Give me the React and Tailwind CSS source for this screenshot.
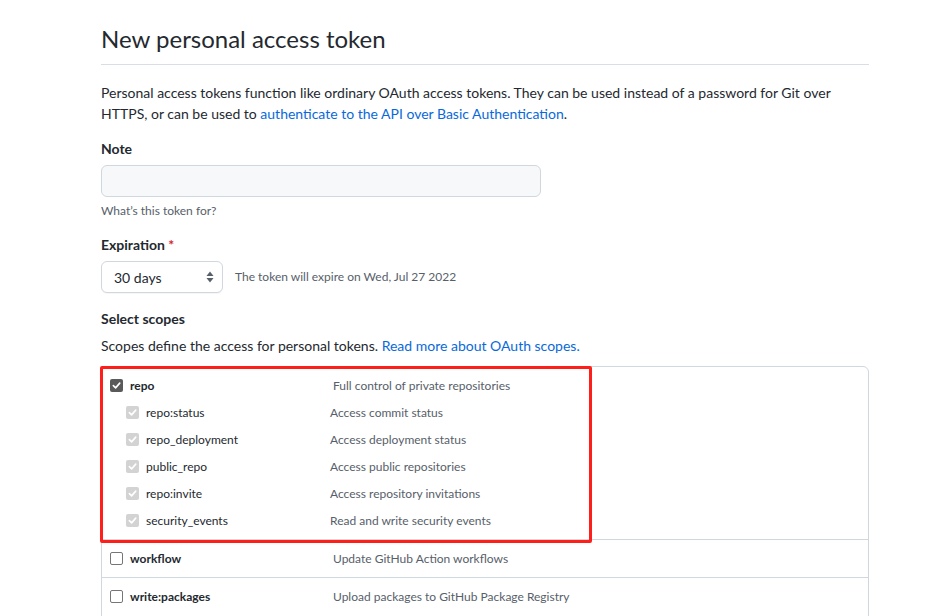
import React from 'react'

// checkbox drawn as a small box with an svg tick
const Check = ({ state }) => {
  if (state === 'off') {
    return <span className="w-[13px] h-[13px] shrink-0 rounded-[2px] border border-[#767676] bg-white" />
  }
  const bg = state === 'on' ? 'bg-[#5a5a5a]' : 'bg-[#d3d3d3]'
  return (
    <span className={`w-[13px] h-[13px] shrink-0 rounded-[2px] ${bg} flex items-center justify-center`}>
      <svg width="9" height="9" viewBox="0 0 10 10" fill="none">
        <path d="M1.5 5.2 L4 7.6 L8.6 2.4" stroke="white" strokeWidth="1.8" strokeLinecap="round" strokeLinejoin="round" />
      </svg>
    </span>
  )
}

const repoScopes = [
  ['repo:status', 'Access commit status'],
  ['repo_deployment', 'Access deployment status'],
  ['public_repo', 'Access public repositories'],
  ['repo:invite', 'Access repository invitations'],
  ['security_events', 'Read and write security events'],
]

const ScopeRow = ({ name, desc, state }) => (
  <div className="h-[27px] flex items-center pl-2">
    <div className="w-[223px] flex items-center gap-[7px]">
      <Check state={state} />
      <span className="text-[12px] font-bold text-[#24292f]">{name}</span>
    </div>
    <span className="text-[12px] text-[#57606a]">{desc}</span>
  </div>
)

const SubRow = ({ name, desc, state }) => (
  <div className="h-[27px] flex items-center pl-6">
    <div className="w-[204px] flex items-center gap-[7px]">
      <Check state={state} />
      <span className="text-[12px] text-[#24292f]">{name}</span>
    </div>
    <span className="text-[12px] text-[#57606a]">{desc}</span>
  </div>
)

export default function App() {
  return (
    <div className="h-[616px] overflow-hidden bg-white font-[Lato,sans-serif] text-[#24292f]">
      <div className="w-[768px] ml-[101px] pt-[21px]">
        <h1 className="text-[24px] leading-[36px] font-normal pb-[7px] border-b border-[#d8dee4]">
          New personal access token
        </h1>

        <p className="mt-[17px] text-[14px] leading-[21px]">
          Personal access tokens function like ordinary OAuth access tokens. They can be used instead of a password for Git over
          HTTPS, or can be used to <a className="text-[#0969da]">authenticate to the API over Basic Authentication</a>.
        </p>

        <div className="mt-[14px] text-[14px] leading-[21px] font-bold">Note</div>
        <div className="mt-[6px] w-[440px] h-[32px] rounded-md border border-[#d0d7de] bg-[#f6f8fa]" />
        <div className="mt-[5px] text-[12px] leading-[18px] text-[#57606a]">What’s this token for?</div>

        <div className="mt-[14px] text-[14px] leading-[21px] font-bold">
          Expiration <span className="text-[#cf222e]">*</span>
        </div>
        <div className="mt-[6px] flex items-center gap-3">
          <div className="w-[122px] h-[32px] rounded-md border border-[#d0d7de] bg-white shadow-[0_1px_0_rgba(27,31,36,0.04)] flex items-center justify-between pl-[12px] pr-[8px]">
            <span className="text-[14px]">30 days</span>
            <svg width="8" height="12" viewBox="0 0 8 12">
              <path d="M4 0.5 L7.5 5 H0.5 Z" fill="#57606a" />
              <path d="M4 11.5 L7.5 7 H0.5 Z" fill="#57606a" />
            </svg>
          </div>
          <span className="text-[12px] text-[#57606a]">The token will expire on Wed, Jul 27 2022</span>
        </div>

        <div className="mt-[15px] text-[14px] leading-[21px] font-bold">Select scopes</div>
        <p className="mt-[6px] text-[14px] leading-[21px]">
          Scopes define the access for personal tokens. <a className="text-[#0969da]">Read more about OAuth scopes.</a>
        </p>

        <div className="relative mt-[10px] border border-[#d0d7de] rounded-tr-md">
          <div className="py-[5px] border-b border-[#d0d7de]">
            <ScopeRow name="repo" desc="Full control of private repositories" state="on" />
            {repoScopes.map(([n, d]) => (
              <SubRow key={n} name={n} desc={d} state="dim" />
            ))}
          </div>
          <div className="py-[5px] border-b border-[#d0d7de]">
            <ScopeRow name="workflow" desc="Update GitHub Action workflows" state="off" />
          </div>
          <div className="py-[5px] border-b border-[#d0d7de]">
            <ScopeRow name="write:packages" desc="Upload packages to GitHub Package Registry" state="off" />
            <SubRow name="read:packages" desc="Download packages from GitHub Package Registry" state="off" />
          </div>

          {/* red annotation box */}
          <div className="absolute left-[-2px] top-[-1px] w-[492px] h-[177px] border-[3px] border-[#ff1f1a] rounded-[2px] pointer-events-none" />
        </div>
      </div>
    </div>
  )
}
